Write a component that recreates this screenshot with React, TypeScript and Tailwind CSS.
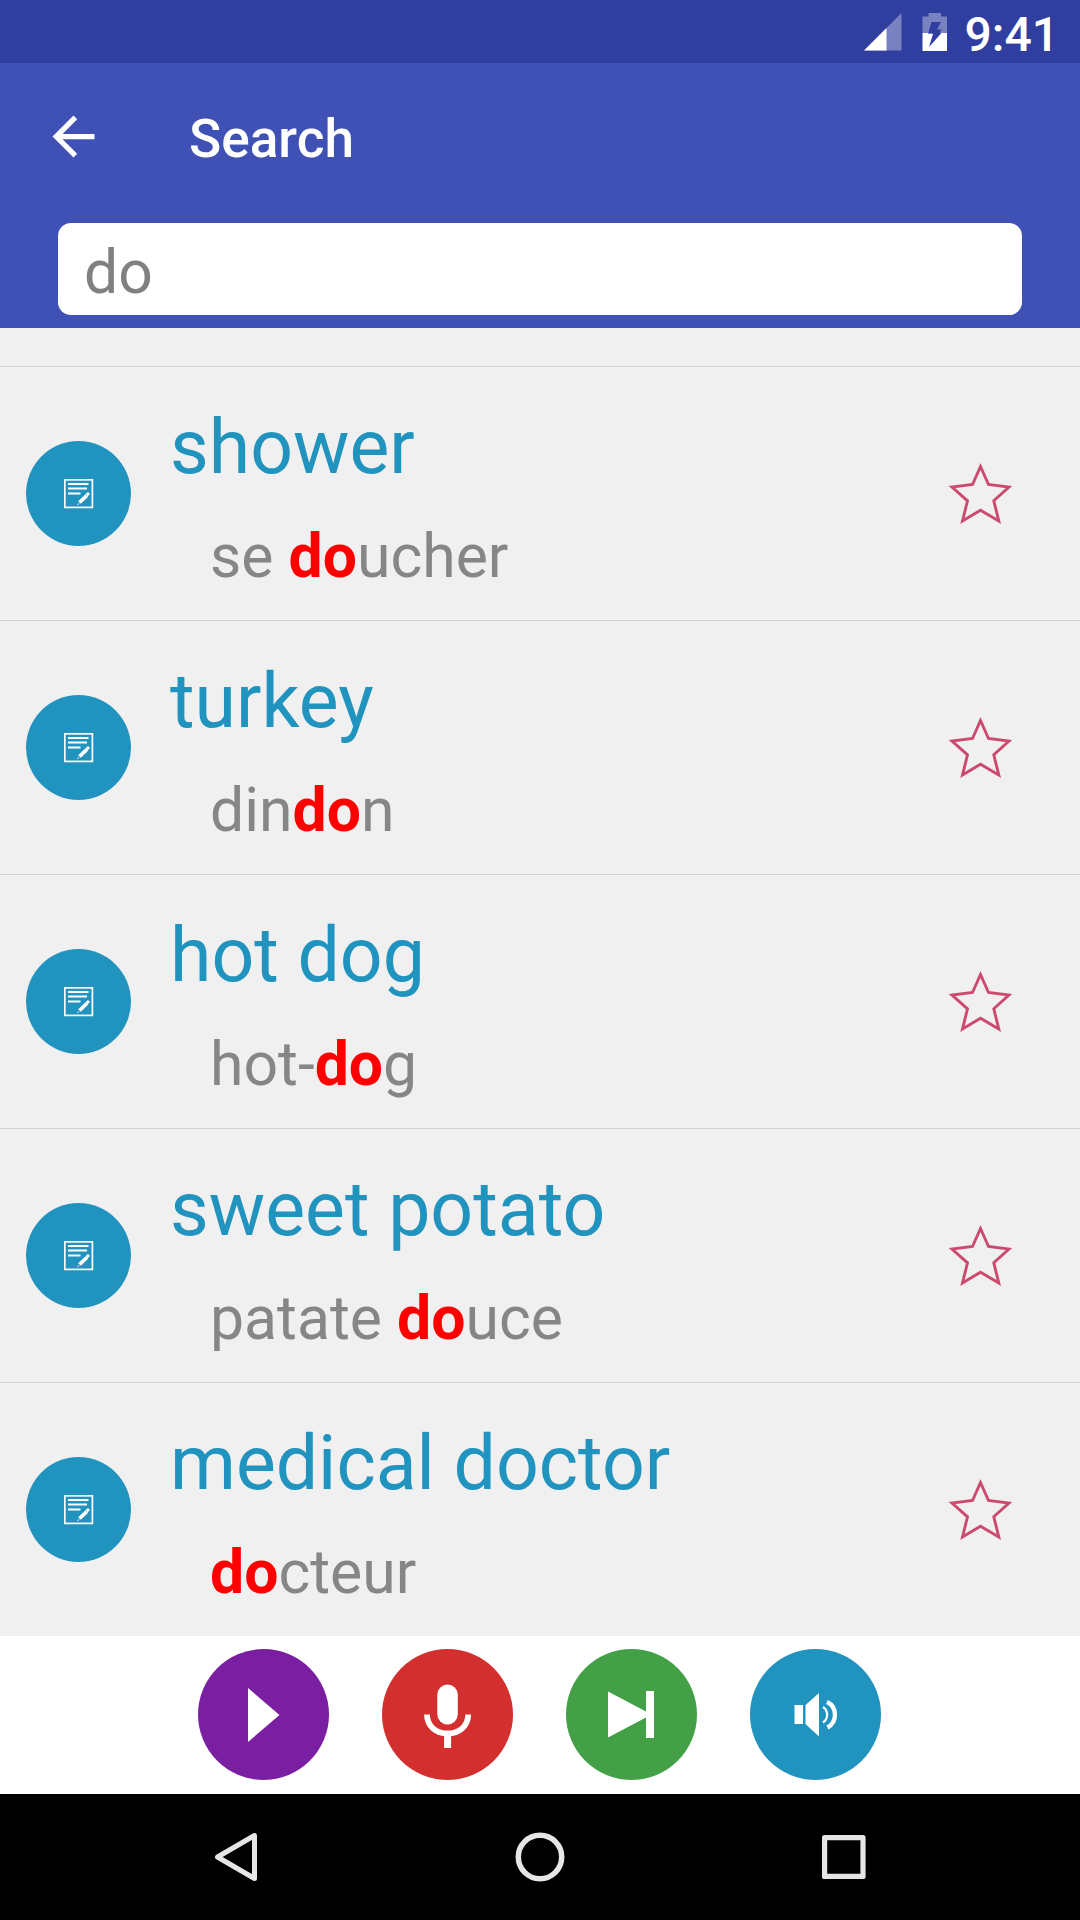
import React from 'react';

const words = [
    {word: 'shower', before: 'se ', match: 'do', after: 'ucher'},
    {word: 'turkey', before: 'din', match: 'do', after: 'n'},
    {word: 'hot dog', before: 'hot-', match: 'do', after: 'g'},
    {word: 'sweet potato', before: 'patate ', match: 'do', after: 'uce'},
    {word: 'medical doctor', before: '', match: 'do', after: 'cteur'},
];

const StatusBar = () => (
    <div className="flex h-[63px] items-center justify-end bg-[#303f9f] pr-[21px] text-white">
        <svg className="mr-[20px] h-[38px] w-[38px]" viewBox="0 0 38 38">
            <path d="M37.500 0V37.500H0z" fill="#fff" opacity="0.35"/>
            <path d="M22.500 15V37.500H0z" fill="#fff"/>
        </svg>
        <svg className="mr-[17px] h-[38px] w-[26px]" viewBox="0 0 26 38">
            <path d="M6.500 0H19v3.500h6V20H17.500l2-3.500H15L19 9H9.500L6 21h4.500l-.3-1H.500V3.500h6z" fill="#fff" opacity="0.35"/>
            <path d="M.500 20H6.300L6 21h5L7 34 19.500 20H25v18H.500z" fill="#fff"/>
        </svg>
        <span className="mt-[7px] text-[48px] font-medium leading-[56px]">9:41</span>
    </div>
);

const Header = () => (
    <header className="h-[265px] bg-[#3f51b5] px-[58px]">
        <div className="flex h-[160px] items-center pb-[13px]">
            <svg className="-ml-[16px] h-[63px] w-[63px]" viewBox="0 0 24 24" fill="#fff">
                <path d="M20 11H7.830l5.590-5.590L12 4l-8 8 8 8 1.410-1.410L7.830 13H20v-2z"/>
            </svg>
            <h1 className="ml-[84px] mt-[5px] text-[53.2px] font-medium leading-[62px] text-white">Search</h1>
        </div>
        <div className="flex h-[92px] items-center rounded-[13px] bg-white pl-[26px]">
            <span className="mt-[8px] text-[60.6px] leading-[70px] text-[#808080]">do</span>
        </div>
    </header>
);

const NoteIcon = () => (
    <svg className="h-[30px] w-[30px]" viewBox="0 0 30 30" fill="none" stroke="#fff">
        <rect x="0.800" y="0.800" width="27.600" height="27.600" strokeWidth="1.700"/>
        <path d="M4 5H24.500M4 9.500H23M4 14.500H16.500" strokeWidth="2"/>
        <path d="M15.500 23.500L22.800 16.500" strokeWidth="3.800"/>
        <path d="M22.600 16.200L25 14" strokeWidth="3"/>
        <path d="M13.300 26L15 24.300" strokeWidth="1"/>
    </svg>
);

const Star = () => (
    <svg className="h-[64px] w-[64px]" viewBox="0 0 64 64" fill="none" stroke="#cc4a70" strokeWidth="2.900">
        <path d="M32.500 4.500L40.500 22.500L61 25L45.800 38.800L50.800 59L32.500 48.200L14.500 59L19.500 38.800L4 25L24.500 22.500z"/>
    </svg>
);

const WordRow = ({word, before, match, after}: {word: string; before: string; match: string; after: string}) => (
    <li className="flex h-[254px] items-center border-t border-[#d2d2d2] pl-[26px] pr-[68px]">
        <div className="flex h-[105px] w-[105px] items-center justify-center rounded-full bg-[#2193bf]">
            <NoteIcon/>
        </div>
        <div className="ml-[39px] flex-1 self-start pt-[36px]">
            <h2 className="text-[75.15px] leading-[88px] text-[#2193bf]">{word}</h2>
            <p className="ml-[40px] mt-[31px] whitespace-pre text-[60.7px] leading-[70px] text-[#868686]">
                {before}<b className="font-bold text-[#ff0000]">{match}</b>{after}
            </p>
        </div>
        <Star/>
    </li>
);

const Controls = () => (
    <div className="flex h-[158px] items-start justify-center gap-[53px] bg-white pr-[2px] pt-[13px]">
        <button className="h-[131px] w-[131px] rounded-full bg-[#7b1fa2]">
            <svg viewBox="0 0 131 131" fill="#fff">
                <path d="M50 39L81.500 66L50 93z"/>
            </svg>
        </button>
        <button className="h-[131px] w-[131px] rounded-full bg-[#d32f2f]">
            <svg viewBox="0 0 131 131" fill="none" stroke="#fff">
                <rect x="55.300" y="35.500" width="20.500" height="40" rx="10.250" fill="#fff" stroke="none"/>
                <path d="M45 65.500C45 77 54 84.500 65.600 84.500S86.200 77 86.200 65.500" strokeWidth="5.800"/>
                <path d="M65.600 84V99" strokeWidth="7"/>
            </svg>
        </button>
        <button className="h-[131px] w-[131px] rounded-full bg-[#43a047]">
            <svg viewBox="0 0 131 131" fill="#fff">
                <path d="M42 42.500L80 62.500V42H88V89H80V68.500L42 88.500z"/>
            </svg>
        </button>
        <button className="h-[131px] w-[131px] rounded-full bg-[#2193bf]">
            <svg viewBox="0 0 131 131" fill="none" stroke="#fff">
                <path d="M44.500 56H53V75H44.500zM55.500 56L69 44V87.500L55.500 75z" fill="#fff" stroke="none"/>
                <path d="M73 58C78.500 61.500 78.500 70 73 73.500" strokeWidth="2.200"/>
                <path d="M77 53C87.500 58 87.500 73 77.500 78.500" strokeWidth="4.300"/>
            </svg>
        </button>
    </div>
);

const NavBar = () => (
    <nav className="flex h-[126px] items-center justify-between bg-black pl-[211px] pr-[211px]">
        <svg className="h-[50px] w-[50px]" viewBox="0 0 50 50" fill="none" stroke="#e6e6e6" strokeWidth="5" strokeLinejoin="round">
            <path d="M43.500 3.500V46.500L6.500 25z"/>
        </svg>
        <svg className="h-[50px] w-[50px]" viewBox="0 0 50 50" fill="none" stroke="#e6e6e6" strokeWidth="5.500">
            <circle cx="25" cy="25" r="21.700"/>
        </svg>
        <svg className="h-[50px] w-[50px]" viewBox="0 0 50 50" fill="none" stroke="#e6e6e6" strokeWidth="5.200" strokeLinejoin="round">
            <path d="M5.600 5.600H44V44.400H5.600z"/>
        </svg>
    </nav>
);

const App = () => {
    return (
        <div className="flex h-[1920px] w-[1080px] flex-col overflow-hidden bg-[#f0f0f0] font-['Roboto',sans-serif]">
            <StatusBar/>
            <Header/>
            <ul className="flex-1 pt-[38px]">
                {words.map((item) => <WordRow key={item.word} {...item}/>)}
            </ul>
            <Controls/>
            <NavBar/>
        </div>
    );
};

export default App;
